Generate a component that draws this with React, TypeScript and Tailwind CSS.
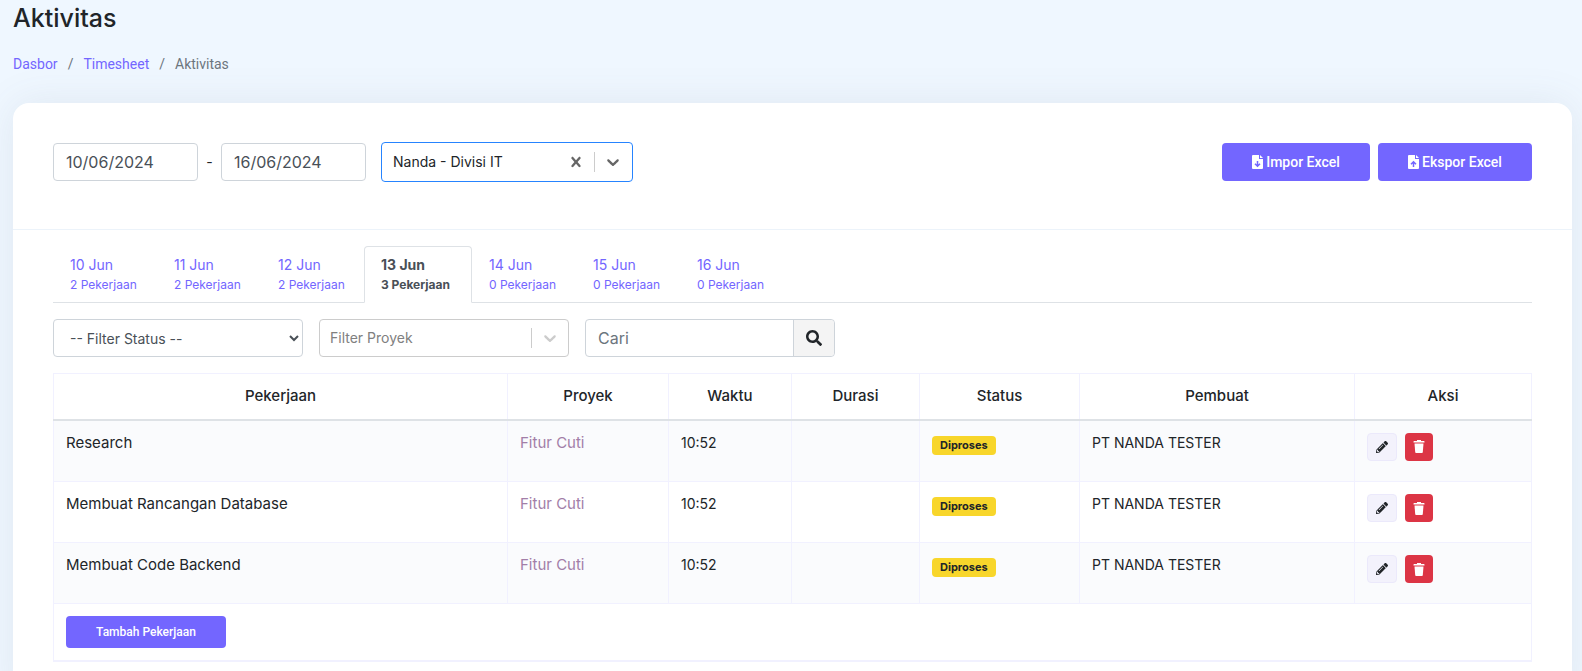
import { useState } from 'react'
import { FaPencilAlt, FaSearch } from 'react-icons/fa'

const days = [
  { label: '10 Jun', count: 2 },
  { label: '11 Jun', count: 2 },
  { label: '12 Jun', count: 2 },
  { label: '13 Jun', count: 3 },
  { label: '14 Jun', count: 0 },
  { label: '15 Jun', count: 0 },
  { label: '16 Jun', count: 0 },
]

const tasks = [
  { id: 1, name: 'Research', project: 'Fitur Cuti', time: '10:52', status: 'Diproses', creator: 'PT NANDA TESTER' },
  { id: 2, name: 'Membuat Rancangan Database', project: 'Fitur Cuti', time: '10:52', status: 'Diproses', creator: 'PT NANDA TESTER' },
  { id: 3, name: 'Membuat Code Backend', project: 'Fitur Cuti', time: '10:52', status: 'Diproses', creator: 'PT NANDA TESTER' },
]

const columns = [
  { title: 'Pekerjaan', width: '' },
  { title: 'Proyek', width: 'w-[161px]' },
  { title: 'Waktu', width: 'w-[123px]' },
  { title: 'Durasi', width: 'w-[128px]' },
  { title: 'Status', width: 'w-[160px]' },
  { title: 'Pembuat', width: 'w-[275px]' },
  { title: 'Aksi', width: 'w-[177px]' },
]

function ChevronIcon() {
  return (
    <svg width="20" height="20" viewBox="0 0 20 20" fill="currentColor" aria-hidden="true">
      <path d="M4.516 7.548c0.436-0.446 1.043-0.481 1.576 0l3.908 3.747 3.908-3.747c0.533-0.481 1.141-0.446 1.574 0 0.436 0.445 0.408 1.197 0 1.615-0.406 0.418-4.695 4.502-4.695 4.502-0.217 0.223-0.502 0.335-0.787 0.335s-0.57-0.112-0.789-0.335c0 0-4.287-4.084-4.695-4.502s-0.436-1.17 0-1.615z" />
    </svg>
  )
}

function CrossIcon() {
  return (
    <svg width="20" height="20" viewBox="0 0 20 20" fill="currentColor" aria-hidden="true">
      <path d="M14.348 14.849c-0.469 0.469-1.229 0.469-1.697 0l-2.651-3.030-2.651 3.029c-0.469 0.469-1.229 0.469-1.697 0-0.469-0.469-0.469-1.229 0-1.697l2.758-3.15-2.759-3.152c-0.469-0.469-0.469-1.228 0-1.697s1.228-0.469 1.697 0l2.652 3.031 2.651-3.031c0.469-0.469 1.228-0.469 1.697 0s0.469 1.229 0 1.697l-2.758 3.152 2.758 3.15c0.469 0.469 0.469 1.229 0 1.698z" />
    </svg>
  )
}

function FileIcon({ direction }: { direction: 'down' | 'up' }) {
  return (
    <svg width="11" height="14" viewBox="0 0 11 14" aria-hidden="true">
      <path d="M1 0H7V4H11V13Q11 14 10 14H1Q0 14 0 13V1Q0 0 1 0Z" fill="currentColor" />
      <path d="M8 0L11 3H8Z" fill="currentColor" />
      <path
        d={direction === 'down' ? 'M5.5 6V11M3 8.8L5.5 11.3L8 8.8' : 'M5.5 12V7M3 9.2L5.5 6.7L8 9.2'}
        fill="none"
        stroke="#7366ff"
        strokeWidth="1.5"
      />
    </svg>
  )
}

function TrashIcon() {
  return (
    <svg width="12" height="13" viewBox="0 0 12 13" fill="currentColor" aria-hidden="true">
      <path d="M4 0H8V1H11Q11.5 1 11.5 2V2.5H0.5V2Q0.5 1 1 1H4Z" />
      <path d="M1.5 3.5H10.5L9.8 12Q9.7 13 9 13H3Q2.3 13 2.2 12Z" />
    </svg>
  )
}

export default function App() {
  const [activeDay, setActiveDay] = useState('13 Jun')
  const [from, setFrom] = useState('10/06/2024')
  const [to, setTo] = useState('16/06/2024')
  const [employee, setEmployee] = useState('nanda')
  const [search, setSearch] = useState('')

  return (
    <div className="min-h-screen overflow-hidden bg-[#eff7ff] pl-[13px] pr-[10px] font-['Inter',sans-serif] text-sm text-[#212529]">
      <h1 className="pt-0.5 text-[25px] leading-8 font-medium">Aktivitas</h1>

      <nav aria-label="Breadcrumb" className="mt-5 font-['Roboto',sans-serif] leading-5">
        <ol className="flex gap-2.5 text-[#6c757d]">
          <li><a href="#dasbor" className="text-[#7366ff]">Dasbor</a></li>
          <li aria-hidden="true">/</li>
          <li><a href="#timesheet" className="text-[#7366ff]">Timesheet</a></li>
          <li aria-hidden="true">/</li>
          <li aria-current="page">Aktivitas</li>
        </ol>
      </nav>

      <main className="mt-[29px] rounded-2xl bg-white shadow-[0_0_40px_rgba(89,102,122,0.1)]">
        <div className="flex items-start justify-between border-b border-[#ecf3fa] px-10 pt-[39px] pb-[47px]">
          <div className="flex items-center">
            <input
              type="text"
              aria-label="Tanggal mulai"
              value={from}
              onChange={(e) => setFrom(e.target.value)}
              className="h-[38px] w-[145px] rounded border border-[#ced4da] px-3 text-base text-[#495057]"
            />
            <span className="w-[23px] text-center">-</span>
            <input
              type="text"
              aria-label="Tanggal selesai"
              value={to}
              onChange={(e) => setTo(e.target.value)}
              className="h-[38px] w-[145px] rounded border border-[#ced4da] px-3 text-base text-[#495057]"
            />
            <div className="ml-[15px] flex h-10 w-[252px] items-center rounded border border-[#2684ff] pr-px">
              <select
                aria-label="Karyawan"
                value={employee}
                onChange={(e) => setEmployee(e.target.value)}
                className="h-full min-w-0 flex-1 appearance-none pl-[11px] outline-none"
              >
                <option value=""></option>
                <option value="nanda">Nanda - Divisi IT</option>
              </select>
              <button type="button" aria-label="Hapus pilihan" onClick={() => setEmployee('')} className="px-2 text-[#666666]">
                <CrossIcon />
              </button>
              <span className="h-5 w-px bg-[#cccccc]" />
              <span className="px-2 text-[#666666]"><ChevronIcon /></span>
            </div>
          </div>

          <div className="flex gap-2 pt-px font-['Roboto',sans-serif] font-medium text-white">
            <button type="button" className="flex h-[38px] w-[148px] items-center justify-center gap-[3px] rounded bg-[#7366ff]">
              <FileIcon direction="down" /> Impor Excel
            </button>
            <button type="button" className="flex h-[38px] w-[154px] items-center justify-center gap-[3px] rounded bg-[#7366ff]">
              <FileIcon direction="up" /> Ekspor Excel
            </button>
          </div>
        </div>

        <div className="px-10 pt-4 pb-10">
          <div role="tablist" className="flex border-b border-[#dee2e6]">
            {days.map((day) => (
              <button
                key={day.label}
                type="button"
                role="tab"
                aria-selected={day.label === activeDay}
                onClick={() => setActiveDay(day.label)}
                className={
                  day.label === activeDay
                    ? '-mb-px -ml-px h-[57px] w-[108px] rounded-t border border-b-white border-[#dee2e6] bg-white pt-px pl-4 text-left font-bold text-[#495057]'
                    : 'h-14 w-[104px] pt-0.5 pl-[17px] text-left text-[#7366ff]'
                }
              >
                <span className="block leading-5">{day.label}</span>
                <span className="block text-xs leading-5">{day.count} Pekerjaan</span>
              </button>
            ))}
          </div>

          <div className="mt-4 flex gap-4">
            <select aria-label="Filter Status" className="h-[38px] w-[250px] rounded border border-[#ced4da] bg-white px-3 text-[#495057]">
              <option>-- Filter Status --</option>
              <option>Diproses</option>
              <option>Selesai</option>
            </select>
            <div className="flex h-[38px] w-[250px] items-center rounded border border-[#cccccc]">
              <select aria-label="Filter Proyek" className="h-full min-w-0 flex-1 appearance-none pl-[10px] text-[#808080] outline-none">
                <option>Filter Proyek</option>
                <option>Fitur Cuti</option>
              </select>
              <span className="h-5 w-px bg-[#cccccc]" />
              <span className="px-2 text-[#cccccc]"><ChevronIcon /></span>
            </div>
            <div className="flex h-[38px] w-[250px] rounded border border-[#ced4da]">
              <input
                type="text"
                aria-label="Cari"
                placeholder="Cari"
                value={search}
                onChange={(e) => setSearch(e.target.value)}
                className="min-w-0 flex-1 px-3 text-base placeholder:text-[#6c757d]"
              />
              <button type="button" aria-label="Cari pekerjaan" className="flex w-[41px] items-center justify-center rounded-r border-l border-[#ced4da] bg-[#f4f4f4]">
                <FaSearch size={16} />
              </button>
            </div>
          </div>

          <table className="mt-4 w-full table-fixed border-collapse border border-b-2 border-[#f1f1ff]">
            <thead>
              <tr className="h-[46px] border-b-2 border-[#dee2e6]">
                {columns.map((col) => (
                  <th key={col.title} scope="col" className={`border-x border-[#f1f1ff] px-3 text-[15px] leading-5 font-medium ${col.width}`}>
                    {col.title}
                  </th>
                ))}
              </tr>
            </thead>
            <tbody>
              {tasks.map((task) => (
                <tr key={task.id} className="h-[61px] align-top first:h-[62px] odd:bg-[#fafbfd] [&>td]:border [&>td]:border-[#f1f1ff] [&>td]:px-3 [&>td]:pt-3">
                  <td className="text-[15px] leading-5">{task.name}</td>
                  <td className="text-[15px] leading-5 text-[#a27ea8]">{task.project}</td>
                  <td>{task.time}</td>
                  <td></td>
                  <td>
                    <span className="mt-[3px] inline-block rounded bg-[#f8d62b] px-2 text-[11px] leading-[19px] font-bold">
                      {task.status}
                    </span>
                  </td>
                  <td>{task.creator}</td>
                  <td>
                    <div className="flex gap-2">
                      <button type="button" aria-label={`Ubah ${task.name}`} className="flex h-7 w-[30px] items-center justify-center rounded-sm border border-[#ebe9fb] bg-[#f3f2fc]">
                        <FaPencilAlt size={12} />
                      </button>
                      <button type="button" aria-label={`Hapus ${task.name}`} className="flex size-7 items-center justify-center rounded-sm bg-[#dc3545] text-white">
                        <TrashIcon />
                      </button>
                    </div>
                  </td>
                </tr>
              ))}
              <tr>
                <td colSpan={7} className="p-3">
                  <button type="button" className="block h-8 w-40 rounded-sm bg-[#7366ff] font-['Roboto',sans-serif] text-xs font-medium text-white">
                    Tambah Pekerjaan
                  </button>
                </td>
              </tr>
            </tbody>
          </table>
        </div>
      </main>
    </div>
  )
}
